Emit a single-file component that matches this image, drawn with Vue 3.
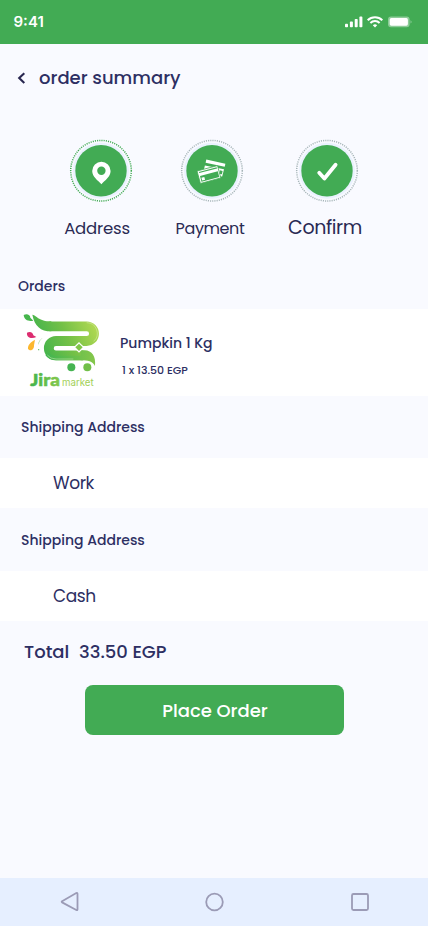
<script setup>
const steps = [
  { label: 'Address', icon: 'pin', current: true },
  { label: 'Payment', icon: 'cards', current: false },
  { label: 'Confirm', icon: 'check', current: false },
]
</script>

<template>
  <div class="screen">
    <div class="status">
      <span class="time">9:41</span>
      <svg class="indicators" width="68" height="14" viewBox="0 0 68 14" fill="#fff">
        <rect x="0" y="8.7" width="3" height="3.6" rx=".8" />
        <rect x="4.9" y="6.6" width="3" height="5.7" rx=".8" />
        <rect x="9.7" y="4" width="3" height="8.3" rx=".8" />
        <rect x="14.4" y="1.6" width="3" height="10.7" rx=".8" />
        <g fill="none" stroke="#fff" stroke-width="2">
          <path d="M22.7 5.2a10.3 10.3 0 0 1 14.6 0" />
          <path d="M25.4 8a6.5 6.5 0 0 1 9.2 0" />
        </g>
        <path d="M27.8 10.3a3.2 3.2 0 0 1 4.4 0L30 12.5z" />
        <rect x="43" y="1.5" width="21.6" height="10.8" rx="3" fill-opacity=".4" />
        <rect x="44.7" y="3.1" width="18.2" height="7.6" rx="1.6" />
        <path d="M65.6 5.3c1.2.6 1.2 2.7 0 3.3z" opacity=".5" />
      </svg>
    </div>

    <header class="title-bar">
      <svg width="9" height="14" viewBox="0 0 9 14" fill="none" stroke="#28264f" stroke-width="2.1">
        <path d="M7.3 2.2L2.2 7l5.1 4.9" />
      </svg>
      <h1>order summary</h1>
    </header>

    <div class="steps">
      <div v-for="s in steps" :key="s.icon" class="step" :class="s.icon">
        <svg width="64" height="64" viewBox="0 0 64 64">
          <circle cx="32" cy="31.7" r="28" fill="#eaf2fe" />
          <circle cx="32" cy="31.7" r="30.3" fill="none" :stroke="s.current ? '#42ab54' : '#a6b5b8'" stroke-width="1.5" stroke-dasharray="1.1 1.1" />
          <circle cx="32" cy="31.7" r="25.7" fill="#42ab54" />
          <path v-if="s.icon === 'pin'" fill="#fff" fill-rule="evenodd" d="M32.4 22.7a9.2 9.2 0 0 0-9.2 9.2c0 5.9 5.7 9.3 9.2 13.3 3.5-4 9.2-7.4 9.2-13.3a9.2 9.2 0 0 0-9.2-9.2zm0 4.9a4.2 4.2 0 1 1 0 8.4 4.2 4.2 0 0 1 0-8.4z" />
          <g v-else-if="s.icon === 'cards'" fill="#fff">
            <path d="M26.3 20.6L45.4 24.8L44.7 27.8L25.6 23.7z" />
            <path d="M24.9 26.5L44 30.3L42.2 37.6L36 37V30.3L24 30.3z" />
            <path d="M39.9 31.3L42.6 31.9L41.9 35.2L39.3 34.7z" fill="#42ab54" />
            <path d="M17 32L37.5 26.6L40.8 38.9L20.4 44.5z" fill="#fff" stroke="#42ab54" stroke-width=".8" />
            <path d="M18.9 32.9L36.7 28.2L37 29.4L19.2 34.1z" fill="#42ab54" />
            <path d="M20 36.9L37.8 32.2L39.3 38L21.5 42.8z" fill="#42ab54" />
            <path d="M21.4 38.7L24.3 37.9L25.1 40.7L22.2 41.5z" />
          </g>
          <path v-else d="M24.2 33.8l5.2 5.7 11.2-13.8" fill="none" stroke="#fff" stroke-width="3.8" stroke-linecap="round" stroke-linejoin="round" />
        </svg>
        <span>{{ s.label }}</span>
      </div>
    </div>

    <h2 class="heading orders">Orders</h2>
    <div class="product">
      <svg width="100" height="87" viewBox="0 12 300 261">
        <defs>
          <linearGradient id="leaf" gradientUnits="userSpaceOnUse" x1="90" y1="130" x2="250" y2="60">
            <stop offset="0" stop-color="#42b34c" />
            <stop offset=".5" stop-color="#73c047" />
            <stop offset="1" stop-color="#add751" />
          </linearGradient>
          <linearGradient id="base" gradientUnits="userSpaceOnUse" x1="110" y1="0" x2="250" y2="0">
            <stop offset="0" stop-color="#42b54f" />
            <stop offset="1" stop-color="#83c64b" />
          </linearGradient>
          <linearGradient id="word" x1="0" y1="0" x2="1" y2="0">
            <stop offset="0" stop-color="#42b34c" />
            <stop offset="1" stop-color="#86c84b" />
          </linearGradient>
        </defs>
        <path d="M67 29C82 32 85 49 124 49V79C91 79 74 63 67 29z" fill="url(#leaf)" />
        <path d="M118 64H230A22 22 0 0 1 230 108H138A21.5 21.5 0 0 0 138 151H220" fill="none" stroke="url(#leaf)" stroke-width="29.5" />
        <path d="M112 146Q120 159 138 159H220" fill="none" stroke="url(#base)" stroke-width="14" />
        <path d="M212 136H224C246 137 258 153 255 183C247 169 235 166 212 166z" fill="url(#base)" />
        <path d="M230 53A32 32 0 0 1 251 109M112 150Q121 162 138 162H190" fill="none" stroke="#e2f1ca" stroke-width="1.3" />
        <path d="M207 111l16 16-16 16-16-16z" fill="#fff" />
        <path d="M207 116l11 11-11 11-11-11z" fill="#80c548" />
        <path d="M41 30C50 24 61 29 61 38L70 47C55 50 43 45 41 30z" fill="#46b64c" />
        <path d="M51 83C61 77 70 84 70 91L79 96C64 102 49 98 51 83z" fill="#dc2d70" />
        <path d="M75 104C61 112 53 120 54 132C63 142 73 132 72 121z" fill="#fcb72e" />
        <path d="M98 99C87 105 84 114 87 119C86 110 90 106 98 99z" fill="#7bc878" />
        <circle cx="86" cy="134" r="2" fill="#54b85e" />
        <circle cx="184" cy="187" r="12" fill="#45b451" />
        <circle cx="232" cy="187" r="12" fill="#71bf49" />
        <text x="61" y="243" class="logo-name" textLength="89" lengthAdjust="spacingAndGlyphs" fill="url(#word)" stroke="url(#word)" stroke-width="1.5">Jira</text>
        <text x="156" y="243" class="logo-sub" textLength="95" lengthAdjust="spacingAndGlyphs" fill="#a2cf57">market</text>
      </svg>
      <div class="details">
        <div class="name">Pumpkin 1 Kg</div>
        <div class="price">1 x 13.50 EGP</div>
      </div>
    </div>

    <h2 class="heading shipping first">Shipping Address</h2>
    <div class="choice">Work</div>
    <h2 class="heading shipping">Shipping Address</h2>
    <div class="choice">Cash</div>

    <div class="total"><span class="total-label">Total</span><span>33.50 EGP</span></div>
    <button class="place">Place Order</button>

    <nav class="system-nav">
      <svg width="20" height="22" viewBox="0 0 20 22"><path d="M2.1 10.2L16.3 2Q17.5 1.5 17.5 2.8V18.3Q17.5 19.6 16.3 19L2.1 11.4Q1.3 10.8 2.1 10.2z" /></svg>
      <svg width="20" height="20" viewBox="0 0 20 20"><circle cx="9.5" cy="10" r="8.3" /></svg>
      <svg width="20" height="20" viewBox="0 0 20 20"><rect x="2" y="2" width="16" height="16" rx="1.5" /></svg>
    </nav>
  </div>
</template>

<style>
body { margin: 0; background: #f9faff; }
</style>

<style scoped>
.screen {
  width: 428px;
  height: 926px;
  display: flex;
  flex-direction: column;
  background: #f9faff;
  color: #2d2f63;
  font-family: Poppins, Inter, "Liberation Sans", sans-serif;
  overflow: hidden;
}
svg { display: block; flex: none; }
h1, h2 { margin: 0; font-weight: 500; }
.status {
  height: 44px;
  display: flex;
  justify-content: space-between;
  padding: 0 15px 0 13.5px;
  box-sizing: border-box;
  background: #42ab54;
  color: #fff;
}
.time { font-family: Inter, sans-serif; font-size: 15px; font-weight: 600; line-height: 44px; }
.indicators { margin-top: 15px; }
.title-bar { height: 67px; display: flex; align-items: center; padding-left: 17px; gap: 13px; }
h1 { font-size: 18px; white-space: nowrap; }
.steps { height: 165px; display: flex; padding: 28px 0 0 58px; box-sizing: border-box; color: #2a2a54; }
.step { display: flex; flex-direction: column; align-items: center; white-space: nowrap; }
.step span { line-height: 24px; margin-top: 14px; font-size: 16px; }
.pin { width: 85px; }
.cards { width: 115px; margin-left: 11px; }
.check { width: 115px; }
.step.pin span { margin-left: -7px; font-size: 16.5px; letter-spacing: -0.2px; }
.step.cards span { margin-left: -3px; letter-spacing: -0.4px; }
.step.check span { margin-left: -3px; font-size: 19px; letter-spacing: -0.4px; margin-top: 13px; }
.heading { font-size: 14px; line-height: 20px; white-space: nowrap; }
.orders { height: 33px; padding-left: 18px; }
.product { height: 87px; background: #fff; display: flex; padding-left: 10px; }
.details { padding: 24px 0 0 10px; }
.name { font-size: 14px; line-height: 20px; font-weight: 500; }
.price { font-size: 11px; line-height: 16px; font-weight: 500; padding: 9px 0 0 2px; }
.logo-name { font: 900 49px Lato, "Open Sans", sans-serif; }
.logo-sub { font: 400 29px Inter, "Open Sans", sans-serif; }
.heading.shipping { height: 63px; line-height: 64px; padding-left: 21px; }
.heading.first { height: 62px; line-height: 63px; }
.choice { height: 50px; line-height: 50px; background: #fff; font-size: 17px; letter-spacing: -0.4px; padding-left: 53px; }
.total { height: 64px; line-height: 62px; display: flex; padding-left: 24px; box-sizing: border-box; font-size: 18px; font-weight: 500; }
.total-label { width: 55px; }
.place {
  width: 259px;
  height: 50px;
  margin-left: 85px;
  padding: 0 0 0 1px;
  border: 0;
  border-radius: 8px;
  background: #42ab54;
  color: #fff;
  font: inherit;
  font-size: 18px;
  font-weight: 500;
}
.system-nav {
  height: 48px;
  margin-top: auto;
  display: flex;
  align-items: center;
  justify-content: space-between;
  padding: 0 58px 0 60px;
  background: #e6efff;
}
.system-nav svg { fill: none; stroke: #9b9bb6; stroke-width: 1.8; }
</style>
